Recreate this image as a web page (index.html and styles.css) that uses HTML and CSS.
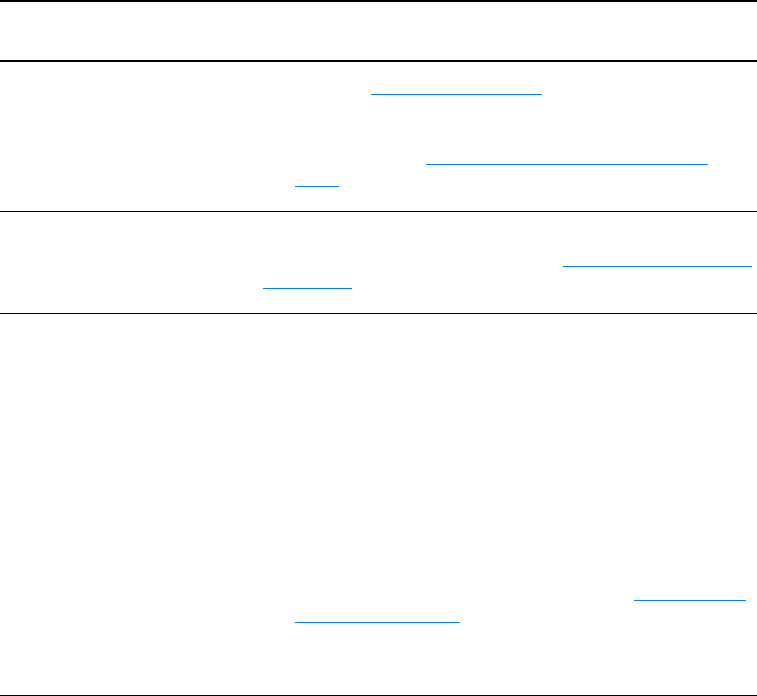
FILE: index.html
```html
<!DOCTYPE html>
<html>
<head>
<meta charset="utf-8">
<link rel="stylesheet" href="styles.css">
</head>
<body>
<div class="table">
  <div class="head"></div>
  <div class="row row1">
    <span class="ul ul1"></span>
    <span class="ul ul2"></span>
    <span class="ul ul3"></span>
  </div>
  <div class="row row2">
    <span class="ul ul4"></span>
    <span class="ul ul5"></span>
  </div>
  <div class="row row3">
    <span class="ul ul6"></span>
    <span class="ul ul7"></span>
  </div>
</div>
</body>
</html>
```
FILE: styles.css
```css
html, body {
  margin: 0;
  padding: 0;
  background: #ffffff;
  font-family: "Liberation Sans", Arial, sans-serif;
}
.table {
  width: 757px;
}
.head {
  border-top: 2px solid #000;
  border-bottom: 2px solid #000;
  height: 58px;
}
.row {
  display: flex;
  flex-direction: column;
  align-items: flex-start;
  border-bottom: 1px solid #000;
}
.ul {
  display: block;
  height: 1px;
  background: #0080ff;
}
.row1 { padding-bottom: 24px; }
.row2 { padding-bottom: 24px; }
.row3 { padding-bottom: 72px; }
.ul1 { margin: 32px 0 0 371px; width: 171px; }
.ul2 { margin: 69px 0 0 426px; width: 282px; }
.ul3 { margin: 21px 0 0 295px; width: 44px; }
.ul4 { margin: 54px 0 0 563px; width: 189px; }
.ul5 { margin: 21px 0 0 263px; width: 89px; }
.ul6 { margin: 286px 0 0 634px; width: 112px; }
.ul7 { margin: 21px 0 0 295px; width: 165px; }
```
